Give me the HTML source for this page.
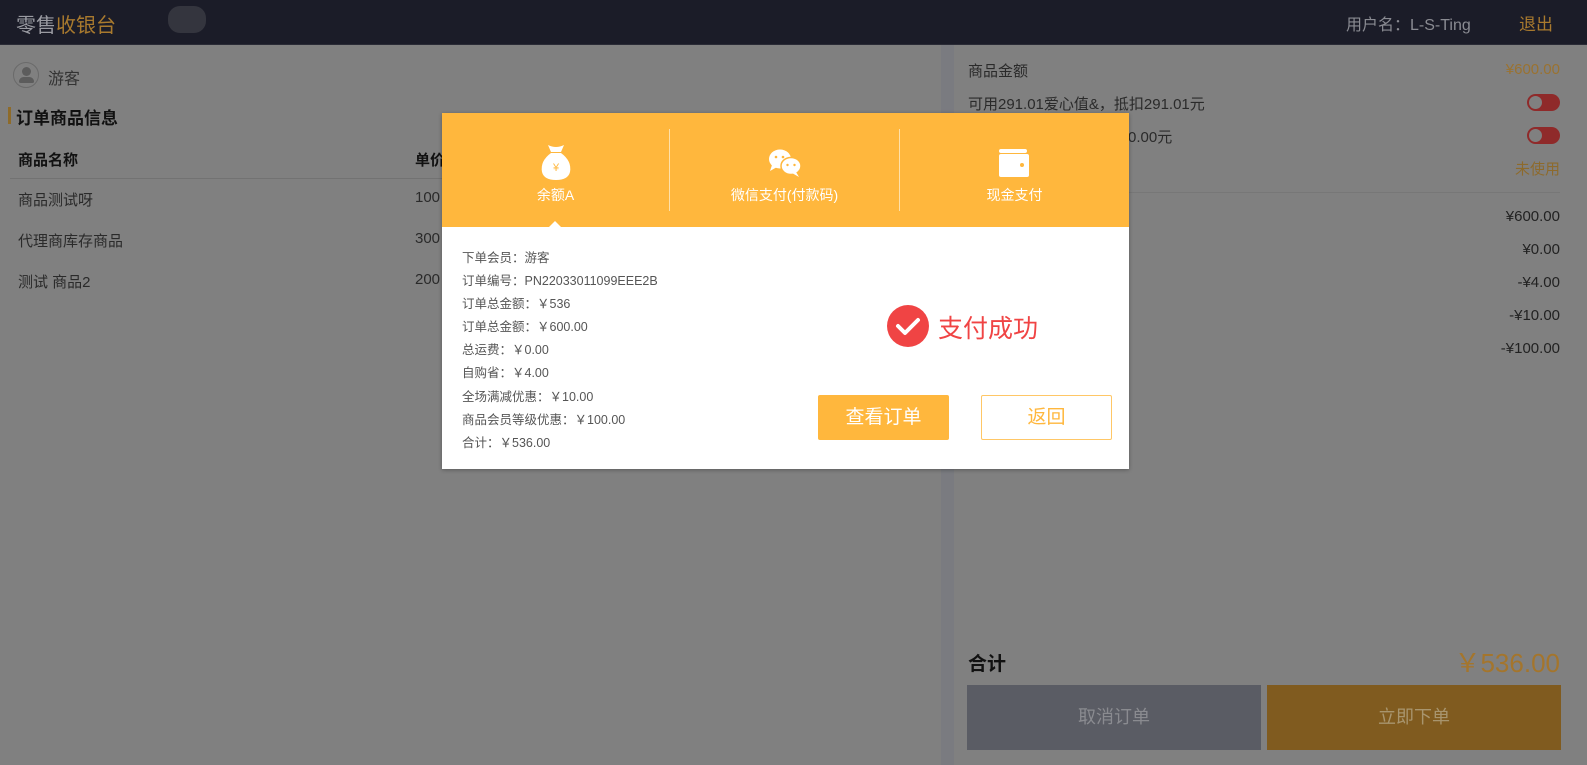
<!DOCTYPE html>
<html><head><meta charset="utf-8"><style>
*{margin:0;padding:0;box-sizing:border-box}
body{width:1587px;height:765px;overflow:hidden;background:#808080;font-family:"Liberation Sans","Noto Sans CJK SC",sans-serif;position:relative;color:#222}
.a{position:absolute;white-space:nowrap}
.hdr{position:absolute;left:0;top:0;width:1587px;height:45px;background:#1b1c28;border-bottom:1px solid #2a2b36}
.r{right:27px;text-align:right}
</style></head><body>
<div class="hdr">
 <div class="a" style="left:16px;top:9px;font-size:20px;color:#9a9ba2">零售<span style="color:#a97a2e">收银台</span></div>
 <div class="a" style="left:168px;top:6px;width:38px;height:27px;border-radius:12px;background:#34353e"></div>
 <div class="a" style="left:1346px;top:11px;font-size:16px;color:#8a8b92">用户名：L-S-Ting</div>
 <div class="a" style="left:1519px;top:10px;font-size:17px;color:#a97a2e">退出</div>
</div>
<!-- left -->
<div class="a" style="left:13px;top:62px;width:26px;height:26px;border-radius:50%;border:1.5px solid #6a6a6a"></div>
<div class="a" style="left:22px;top:67px;width:9px;height:9px;border-radius:50%;background:#5c5c5c"></div>
<div class="a" style="left:19px;top:77px;width:15px;height:6px;border-radius:6px 6px 2px 2px;background:#5c5c5c"></div>
<div class="a" style="left:48px;top:65px;font-size:16px;color:#333">游客</div>
<div class="a" style="left:8px;top:107px;width:3px;height:17px;background:#8e6b2a"></div>
<div class="a" style="left:16px;top:104px;font-size:17px;font-weight:bold;color:#111">订单商品信息</div>
<div class="a" style="left:18px;top:149px;font-size:15px;font-weight:bold;color:#111">商品名称</div>
<div class="a" style="left:415px;top:149px;font-size:15px;font-weight:bold;color:#111">单价</div>
<div class="a" style="left:10px;top:178px;width:440px;height:1px;background:#727272"></div>
<div class="a" style="left:18px;top:189px;font-size:15px;color:#2a2a2a">商品测试呀</div>
<div class="a" style="left:415px;top:189px;font-size:15px;color:#2a2a2a">100</div>
<div class="a" style="left:18px;top:230px;font-size:15px;color:#2a2a2a">代理商库存商品</div>
<div class="a" style="left:415px;top:230px;font-size:15px;color:#2a2a2a">300</div>
<div class="a" style="left:18px;top:271px;font-size:15px;color:#2a2a2a">测试 商品2</div>
<div class="a" style="left:415px;top:271px;font-size:15px;color:#2a2a2a">200</div>
<!-- divider -->
<div class="a" style="left:941px;top:45px;width:13px;height:720px;background:#7a7b80"></div>
<!-- right -->
<div class="a" style="left:968px;top:60px;font-size:15px;color:#2a2a2a">商品金额</div>
<div class="a r" style="top:61px;font-size:15px;color:#9a7230">¥600.00</div>
<div class="a" style="left:968px;top:93px;font-size:15px;color:#2a2a2a">可用291.01爱心值&amp;，抵扣291.01元</div>
<div class="a" style="left:1527px;top:94px;width:33px;height:17px;border-radius:9px;background:#8f2a2a"></div>
<div class="a" style="left:1529px;top:96px;width:13px;height:13px;border-radius:50%;background:#808080"></div>
<div class="a" style="left:1128px;top:126px;font-size:15px;color:#2a2a2a">0.00元</div>
<div class="a" style="left:1527px;top:127px;width:33px;height:17px;border-radius:9px;background:#8f2a2a"></div>
<div class="a" style="left:1529px;top:129px;width:13px;height:13px;border-radius:50%;background:#808080"></div>
<div class="a r" style="top:158px;font-size:15px;color:#8d6a2c">未使用</div>
<div class="a" style="left:968px;top:192px;width:592px;height:1px;background:#777"></div>
<div class="a r" style="top:208px;font-size:15px;color:#222">¥600.00</div>
<div class="a r" style="top:241px;font-size:15px;color:#222">¥0.00</div>
<div class="a r" style="top:274px;font-size:15px;color:#222">-¥4.00</div>
<div class="a r" style="top:307px;font-size:15px;color:#222">-¥10.00</div>
<div class="a r" style="top:340px;font-size:15px;color:#222">-¥100.00</div>
<div class="a" style="left:968px;top:649px;font-size:19px;font-weight:bold;color:#111">合计</div>
<div class="a r" style="top:643px;font-size:26px;color:#a4752c">￥536.00</div>
<div class="a" style="left:967px;top:685px;width:294px;height:65px;background:#5a5c64;color:#8a8b90;font-size:18px;text-align:center;line-height:65px">取消订单</div>
<div class="a" style="left:1267px;top:685px;width:294px;height:65px;background:#805b1f;color:#a8956e;font-size:18px;text-align:center;line-height:65px">立即下单</div>
<!-- modal -->
<div class="a" style="left:442px;top:113px;width:687px;height:356px;background:#fff;box-shadow:0 1px 4px rgba(0,0,0,.3)">
 <div class="a" style="left:0;top:0;width:687px;height:114px;background:#ffb73d"></div>
 <div class="a" style="left:227px;top:16px;width:1px;height:82px;background:#ffe0a8"></div>
 <div class="a" style="left:457px;top:16px;width:1px;height:82px;background:#ffe0a8"></div>
 <div class="a" style="left:106px;top:108px;width:0;height:0;border-left:7px solid transparent;border-right:7px solid transparent;border-bottom:7px solid #fff"></div>
 <svg class="a" style="left:97px;top:30px" width="34" height="38" viewBox="0 0 34 38"><path d="M9 2 Q17 6 25 2 L22 9 L12 9 Z" fill="#fff"/><path d="M12 10 L22 10 Q33 18 31 29 Q29 37 17 37 Q5 37 3 29 Q1 18 12 10Z" fill="#fff"/><text x="17" y="28" font-size="11" fill="#ffb73d" text-anchor="middle" font-family="Liberation Sans">¥</text></svg>
 <div class="a" style="left:0;top:72px;width:227px;text-align:center;font-size:14px;color:#fff">余额A</div>
 <svg class="a" style="left:326px;top:35px" width="34" height="30" viewBox="0 0 34 30"><ellipse cx="12" cy="11" rx="11" ry="9.5" fill="#fff"/><path d="M4 17 L2 23 L9 19Z" fill="#fff"/><ellipse cx="23" cy="18" rx="10" ry="8.5" stroke="#ffb73d" stroke-width="1.5" fill="#fff"/><path d="M28 24 L31 29 L24 25Z" fill="#fff"/><circle cx="8" cy="9" r="1.3" fill="#ffb73d"/><circle cx="15" cy="9" r="1.3" fill="#ffb73d"/><circle cx="19.5" cy="17" r="1.2" fill="#ffb73d"/><circle cx="26.5" cy="17" r="1.2" fill="#ffb73d"/></svg>
 <div class="a" style="left:228px;top:72px;width:229px;text-align:center;font-size:14px;color:#fff">微信支付(付款码)</div>
 <svg class="a" style="left:556px;top:33px" width="32" height="32" viewBox="0 0 32 32"><rect x="1" y="3" width="28" height="4" rx="2" fill="#fff"/><rect x="1" y="8" width="30" height="23" rx="2" fill="#fff"/><circle cx="24" cy="19" r="2" fill="#ffb73d"/></svg>
 <div class="a" style="left:458px;top:72px;width:229px;text-align:center;font-size:14px;color:#fff">现金支付</div>
 <div class="a" style="left:20px;top:134px;font-size:12.5px;color:#555;line-height:23.1px">下单会员：游客<br>订单编号：PN22033011099EEE2B<br>订单总金额：￥536<br>订单总金额：￥600.00<br>总运费：￥0.00<br>自购省：￥4.00<br>全场满减优惠：￥10.00<br>商品会员等级优惠：￥100.00<br>合计：￥536.00</div>
 <svg class="a" style="left:444px;top:191px" width="44" height="44" viewBox="0 0 44 44"><circle cx="22" cy="22" r="21" fill="#f04444"/><path d="M12 22 L19 29 L32 16" stroke="#fff" stroke-width="4" fill="none" stroke-linecap="round" stroke-linejoin="round"/></svg>
 <div class="a" style="left:496px;top:196px;font-size:25px;color:#f04444">支付成功</div>
 <div class="a" style="left:376px;top:282px;width:131px;height:45px;background:#ffb73d;border-radius:2px;color:#fff;font-size:19px;text-align:center;line-height:45px">查看订单</div>
 <div class="a" style="left:539px;top:282px;width:131px;height:45px;border:1px solid #ffc766;border-radius:2px;color:#ffb73d;font-size:19px;text-align:center;line-height:43px">返回</div>
</div>
</body></html>
